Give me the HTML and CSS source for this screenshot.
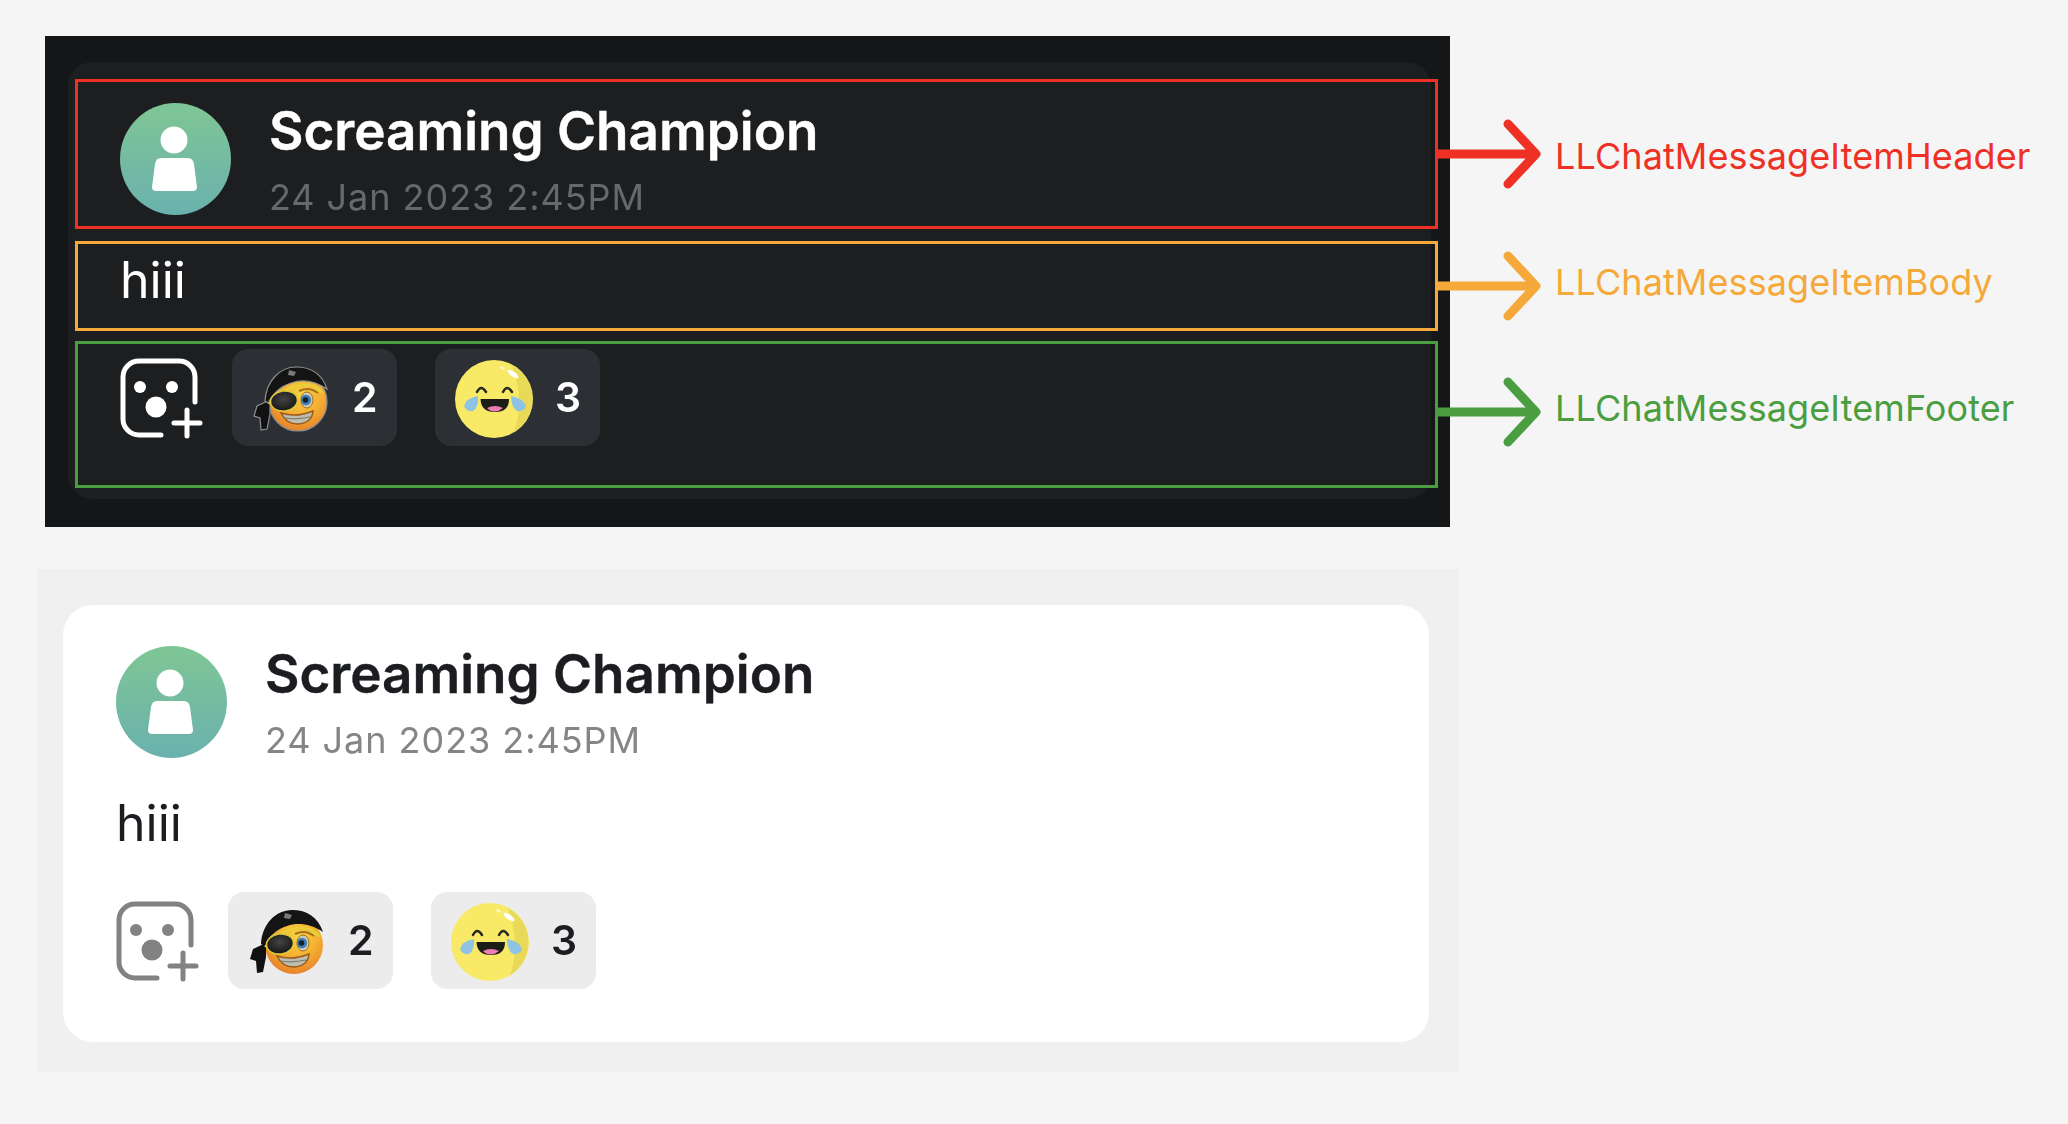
FILE: index.html
```html
<!DOCTYPE html>
<html lang="en">
<head>
<meta charset="utf-8">
<title>LLChatMessageItem</title>
<link rel="stylesheet" href="styles.css">
</head>
<body>
<svg class="defs" aria-hidden="true">
  <defs>
    <radialGradient id="faceGrad" cx="0.55" cy="0.35" r="0.68">
      <stop offset="0" stop-color="#f7d23f"/>
      <stop offset="0.55" stop-color="#f4ae32"/>
      <stop offset="1" stop-color="#e67f2a"/>
    </radialGradient>
    <radialGradient id="patchGrad" cx="0.5" cy="0.4" r="0.6">
      <stop offset="0" stop-color="#444444"/>
      <stop offset="1" stop-color="#161616"/>
    </radialGradient>
    <symbol id="person" viewBox="0 0 112 112">
      <circle cx="54" cy="37" r="13.5" fill="#fff"/>
      <path d="M41 55H68Q73 55 74 61L77 84Q77 88 73 88H36Q32 88 32 84L35 61Q36 55 41 55Z" fill="#fff"/>
    </symbol>
    <symbol id="react" viewBox="0 0 88 84">
      <path class="react-line" d="M42 78H20A16 16 0 0 1 4 62V20A16 16 0 0 1 20 4H60A16 16 0 0 1 76 20V45"/>
      <circle class="react-dot" cx="21" cy="30" r="6"/>
      <circle class="react-dot" cx="53" cy="30" r="6"/>
      <circle class="react-dot" cx="37" cy="50" r="10.5"/>
      <path class="react-line" d="M55 66H81M68 53V79"/>
    </symbol>
    <symbol id="pirate" viewBox="0 0 90 80">
      <circle cx="49" cy="44" r="29" fill="url(#faceGrad)" class="halo"/>
      <path class="halo" d="M21 42L8 48L5 58L11 60L12 72L18 71L21 56Z" fill="#111111"/>
      <path class="halo" d="M16 43C17 23 31 9 47 9C62 9 73 16 78 31C66 23 53 21 42 25C32 28 24 35 19 45Z" fill="#141414"/>
      <path d="M40 12L47 14L45 18L39 17Z" fill="#7a7a7a"/>
      <path d="M20 46C28 34 44 26 60 27C66 28 71 31 73 34C64 30 54 31 47 34" fill="none" stroke="#e6d03c" stroke-width="2"/>
      <ellipse cx="35" cy="43" rx="13.500" ry="10" transform="rotate(-8 35 43)" fill="url(#patchGrad)" stroke="#dcc838" stroke-width="1.500"/>
      <path d="M50 33Q60 28 69 35" fill="none" stroke="#a86e1c" stroke-width="2"/>
      <ellipse cx="58" cy="42" rx="6" ry="8" fill="#cfccba" stroke="#a86e1c" stroke-width="1"/>
      <circle cx="57" cy="42" r="5.200" fill="#3f7db8"/>
      <circle cx="56.500" cy="42" r="2.800" fill="#14202c"/>
      <path d="M32 55Q47 60 64 53Q63 65 49 66Q37 66 32 55Z" fill="#bdbdb0" stroke="#9a5a1a" stroke-width="1.500"/>
      <path d="M35 60Q48 62 61 59" fill="none" stroke="#7c7c70" stroke-width="1.200"/>
    </symbol>
    <symbol id="laugh" viewBox="3 0 90 80">
      <circle cx="45" cy="41" r="39" fill="#f8e967"/>
      <path d="M63 7A39 39 0 0 1 65 74.500Q76 42 63 7Z" fill="#e9d958"/>
      <ellipse cx="64" cy="16" rx="6.500" ry="2.500" transform="rotate(35 64 16)" fill="#fff"/>
      <ellipse cx="53.500" cy="10" rx="2.500" ry="1.500" transform="rotate(25 53.500 10)" fill="#fff8c8"/>
      <path d="M28 34Q32 26 37 34M54 34Q58 26 63 34" fill="none" stroke="#2a2a20" stroke-width="2.500" stroke-linecap="round"/>
      <path d="M31.500 41H60Q60 54 46 54Q32 54 31.500 41Z" fill="#1d1d18"/>
      <path d="M38 50Q46 46 54 50Q50 53.500 46 53.500Q41 53.500 38 50Z" fill="#ec7eb4"/>
      <path d="M29 38Q17 40 15 48Q17 54 24 53Q30 49 29 38Z" fill="#8fc3e4"/>
      <path d="M62 38Q74 40 77 48Q75 54 68 53Q62 49 62 38Z" fill="#8fc3e4"/>
    </symbol>
  </defs>
</svg>

<section class="panel panel-dark">
  <article class="card">
    <div class="stack">
      <header class="box box-header">
        <div class="avatar"><svg class="person"><use href="#person"/></svg></div>
        <div class="meta">
          <div class="name">Screaming Champion</div>
          <div class="date">24 Jan 2023 2:45PM</div>
        </div>
        <div class="note note-red">
          <svg class="arrow" viewBox="0 0 104 70"><path d="M0 35H96M70 5L98 35L70 65"/></svg>
          <span class="note-label">LLChatMessageItemHeader</span>
        </div>
      </header>
      <div class="box box-body">
        <p class="message">hiii</p>
        <div class="note note-orange">
          <svg class="arrow" viewBox="0 0 104 70"><path d="M0 35H96M70 5L98 35L70 65"/></svg>
          <span class="note-label">LLChatMessageItemBody</span>
        </div>
      </div>
      <footer class="box box-footer">
        <svg class="react"><use href="#react"/></svg>
        <div class="chip"><svg class="emoji"><use href="#pirate"/></svg><span class="count">2</span></div>
        <div class="chip"><svg class="emoji"><use href="#laugh"/></svg><span class="count">3</span></div>
        <div class="note note-green">
          <svg class="arrow" viewBox="0 0 104 70"><path d="M0 35H96M70 5L98 35L70 65"/></svg>
          <span class="note-label">LLChatMessageItemFooter</span>
        </div>
      </footer>
    </div>
  </article>
</section>

<section class="panel panel-light">
  <article class="card">
    <div class="stack">
      <header class="box box-header">
        <div class="avatar"><svg class="person"><use href="#person"/></svg></div>
        <div class="meta">
          <div class="name">Screaming Champion</div>
          <div class="date">24 Jan 2023 2:45PM</div>
        </div>
      </header>
      <div class="box box-body">
        <p class="message">hiii</p>
      </div>
      <footer class="box box-footer">
        <svg class="react"><use href="#react"/></svg>
        <div class="chip"><svg class="emoji"><use href="#pirate"/></svg><span class="count">2</span></div>
        <div class="chip"><svg class="emoji"><use href="#laugh"/></svg><span class="count">3</span></div>
      </footer>
    </div>
  </article>
</section>
</body>
</html>
```
FILE: styles.css
```css
* { box-sizing: border-box; }

html, body { height: 100%; }

body {
  margin: 0;
  padding: 36px 0 0 45px;
  background: #f5f5f5;
  font-family: Inter, "Liberation Sans", sans-serif;
  overflow: hidden;
}

.defs { position: absolute; width: 0; height: 0; }

.panel-dark {
  --ink: #ffffff;
  --muted: #66686a;
  --chip: #2c2f34;
  --icon: #ffffff;
  --halo: #8e8e8e;
  width: 1405px;
  height: 491px;
  padding: 26px 19px 28px 23px;
  background: #151618;
}

.panel-dark .card { background: #1d1e20; border-radius: 24px; }

.panel-light {
  --ink: #1b1d21;
  --muted: #858585;
  --chip: #ececec;
  --icon: #828282;
  --halo: none;
  width: 1422px;
  height: 503px;
  margin: 42px 0 0 -8px;
  padding: 36px 30px 30px 26px;
  background: #f0f0f0;
}

.panel-light .card { background: #ffffff; border-radius: 30px; }

.card { height: 100%; padding: 17px 0 11px 7px; }
.panel-light .card { padding-left: 8px; }

.stack { display: flex; flex-direction: column; width: 1363px; }

.box { position: relative; border: 3px solid transparent; }

.box-header {
  display: flex;
  gap: 38px;
  height: 150px;
  padding: 21px 0 0 42px;
}

.box-body {
  height: 90px;
  margin-top: 12px;
  padding: 6px 0 0 42px;
}

.box-footer {
  display: flex;
  align-items: flex-start;
  height: 147px;
  margin-top: 10px;
  padding: 5px 0 0 42px;
}

.panel-dark .box-header { border-color: #ee3124; }
.panel-dark .box-body { border-color: #f4a93a; }
.panel-dark .box-footer { border-color: #4a9e40; }

.avatar {
  flex: none;
  width: 111px;
  height: 112px;
  border-radius: 50%;
  background: linear-gradient(180deg, #7fc695, #6ab1ae);
  filter: blur(0.4px);
}

.person { display: block; width: 112px; height: 112px; }

.meta { margin-top: -2px; filter: blur(0.3px); }

.name {
  color: var(--ink);
  font-size: 53px;
  font-weight: 600;
  line-height: 60px;
  -webkit-text-stroke: 0.4px var(--ink);
}

.date {
  margin-top: 14px;
  color: var(--muted);
  font-size: 36px;
  line-height: 44px;
  letter-spacing: 0.95px;
}

.message {
  margin: 0;
  color: var(--ink);
  font-size: 50px;
  line-height: 60px;
  filter: blur(0.3px);
}

.react {
  flex: none;
  display: block;
  width: 88px;
  height: 84px;
  margin: 8px 25px 0 -1px;
  filter: blur(0.5px);
}

.react-line {
  fill: none;
  stroke: var(--icon);
  stroke-width: 5;
  stroke-linecap: round;
}

.react-dot { fill: var(--icon); }

.chip {
  display: flex;
  align-items: center;
  gap: 13px;
  width: 165px;
  height: 97px;
  margin-right: 38px;
  padding-left: 17px;
  border-radius: 16px;
  background: var(--chip);
}

.emoji { flex: none; display: block; width: 90px; height: 80px; filter: blur(0.5px); }

.halo { stroke: var(--halo); stroke-width: 1.200; }

.count {
  color: var(--ink);
  font-size: 41px;
  font-weight: 600;
  line-height: 1;
  filter: blur(0.3px);
}

.note {
  position: absolute;
  left: calc(100% + 3px);
  top: 50%;
  display: flex;
  align-items: center;
  gap: 13px;
  transform: translateY(-50%);
  white-space: nowrap;
}

.note-green { margin-top: -3px; }

.arrow { flex: none; display: block; width: 104px; height: 70px; }

.arrow path {
  fill: none;
  stroke: currentColor;
  stroke-width: 9;
  stroke-linecap: round;
  stroke-linejoin: round;
}

.note-label { font-size: 36px; line-height: 44px; letter-spacing: 0.1px; }

.note-red .note-label { margin-top: 4px; }
.note-orange .note-label { margin-top: -8px; }
.note-green .note-label { margin-top: -7px; }

.note-red { color: #ee3124; }
.note-orange { color: #f4a93a; }
.note-green { color: #4a9e40; }
```
